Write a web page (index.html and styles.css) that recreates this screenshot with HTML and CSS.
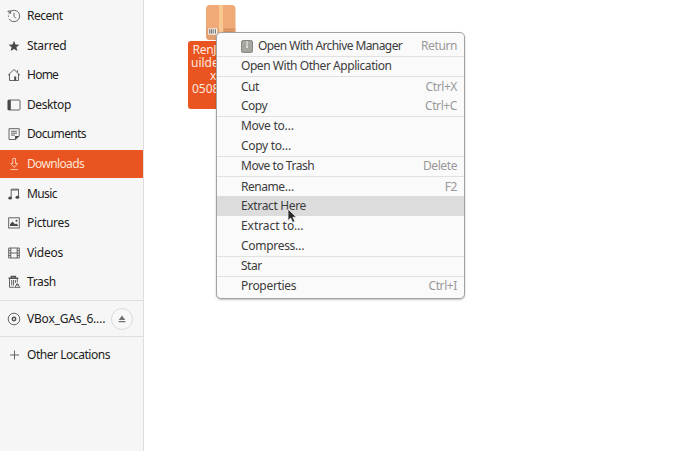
FILE: index.html
```html
<!DOCTYPE html>
<html lang="en">
<head>
<meta charset="utf-8">
<title>Downloads</title>
<link rel="stylesheet" href="styles.css">
</head>
<body>
<div class="window">
  <nav class="sidebar">
    <div class="places">
      <div class="place"><svg viewBox="0 0 14 14"><path d="M3.2 2.7A5.7 5.7 0 1 1 2 9.8" class="line"/><path d="M1.4 7.8V6.5M2 4.6l.4-.8M.8 2.2l3-.3-.5 2.8z" class="line"/><path d="M7 3.8v3.5l1.8 2" class="line"/></svg><span class="t-recent">Recent</span></div>
      <div class="place"><svg viewBox="0 0 14 14"><path d="M7 1.8l1.5 3.6 3.9.3-3 2.5 1 3.8L7 9.9 3.6 12l1-3.8-3-2.5 3.9-.3z" class="solid"/></svg><span class="t-starred">Starred</span></div>
      <div class="place"><svg viewBox="0 0 14 14"><path d="M1 7.3L7 1.5l6 5.8M2.5 6v6.5h9V6M10.5 4.5V2.2" class="line"/><path d="M7.2 8.5h2v4h-2z" class="solid"/></svg><span class="t-home">Home</span></div>
      <div class="place"><svg viewBox="0 0 14 14"><rect x="1" y="2" width="12" height="10" rx="1" class="line"/><path d="M.8 2h3v10h-3z" class="solid"/></svg><span class="t-desktop">Desktop</span></div>
      <div class="place"><svg viewBox="0 0 14 14"><path d="M2 1.7h10.2v7.2l-3.4 3.6H2z" class="line"/><path d="M4 4.3h6M4 6.2h6M4 8.1h4" class="line"/><path d="M8 12.6V9h4.5z" class="solid"/></svg><span class="t-documents">Documents</span></div>
      <div class="place selected"><svg viewBox="0 0 14 14"><path d="M5.8 1.5h2.8v5h2L7.2 10.4 3.8 6.5h2zM3.4 12.6h7.6" class="line"/></svg><span class="t-downloads">Downloads</span></div>
      <div class="place"><svg viewBox="0 0 14 14"><path d="M4.2 10.8V2.2h7.3v7.7M4.2 3h7.3" class="line"/><ellipse cx="3.1" cy="11" rx="1.9" ry="1.5" class="solid"/><ellipse cx="10.4" cy="10.3" rx="1.9" ry="1.5" class="solid"/></svg><span class="t-music">Music</span></div>
      <div class="place"><svg viewBox="0 0 14 14"><rect x="1.7" y="1.8" width="10.6" height="10.2" class="line"/><path d="M3 10V8.2L5.5 5.6 8 8.3l1.2-.9L11 9v1z" class="solid"/><circle cx="9.5" cy="4.7" r="1" class="solid"/></svg><span class="t-pictures">Pictures</span></div>
      <div class="place"><svg viewBox="0 0 14 14"><path d="M1.7 2h10.6v10H1.7zM3.8 2v10M10.2 2v10M3.8 7h6.4" class="line"/><path d="M1.7 4.5h2M1.7 7h2M1.7 9.5h2M10.2 4.5h2M10.2 7h2M10.2 9.5h2" class="line"/></svg><span class="t-videos">Videos</span></div>
      <div class="place"><svg viewBox="0 0 14 14"><path d="M1.5 3.2h9.8M4.3 3V1.4h4V3" class="line bold"/><path d="M2.5 3.5v8.8h5M10.3 3.5v3.7M4.7 5v5.5M6.5 5v5.5M8.4 5v3" class="line"/><path d="M8 12.4l2.2-4.1 2.7 4.1zM9 10h3" class="line"/></svg><span class="t-trash">Trash</span></div>
    </div>
    <div class="mount place"><svg viewBox="0 0 14 14"><circle cx="7" cy="7" r="5.8" class="line"/><circle cx="7" cy="7" r="1.7" class="line bold"/></svg><span class="t-vbox">VBox_GAs_6.…</span><button class="eject" aria-label="Eject"><svg viewBox="0 0 8 8"><path d="M4 .6L7.3 5H.7zM.7 6h6.6v1.2H.7z"/></svg></button></div>
    <div class="other place"><svg viewBox="0 0 14 14"><path d="M7.5 2.5v9M3 7h9" class="line"/></svg><span class="t-other">Other Locations</span></div>
  </nav>
  <main class="files">
    <div class="file">
      <svg class="package" viewBox="0 0 32 36"><rect x="1" y="1" width="29.5" height="35" rx="4" fill="#efaa78"/><path d="M1 24h29.5v8a4 4 0 0 1-4 4H5a4 4 0 0 1-4-4z" fill="#e29f70"/><path d="M14 1h4v35h-4z" fill="#f8c890"/><path d="M3.3 24.3h9v6.4h-9z" fill="#f7f4ef"/><path d="M4.8 25.2v4.4M6.4 25.2v4.4M8.2 25.2v4.4M10.4 25.2v4.4" stroke="#555" stroke-width=".9"/><path d="M19.5 25.6h9M19.5 27.6h9" stroke="#cf8455" stroke-width=".8"/></svg>
      <div class="filename"><span class="l1">RenJ</span><span class="l2">uilde</span><span class="l3">x</span><span class="l4">0508</span></div>
    </div>
  </main>
  <div class="menu">
    <div class="item app"><svg viewBox="0 0 12 13"><rect x=".5" y=".5" width="11" height="12" rx="1.6" fill="#a4a59f" stroke="#888983"/><path d="M5.2 1h1.8v6H5.2z" fill="#c2c3bd"/><path d="M6.1 2v5" stroke="#eee" stroke-dasharray="1 1"/><rect x="5.3" y="6" width="1.6" height="2" fill="#e4e4e0"/></svg><span class="m-archive">Open With Archive Manager</span><kbd>Return</kbd></div>
    <hr>
    <div class="item"><span class="m-app">Open With Other Application</span></div>
    <hr>
    <div class="item"><span class="m-cut">Cut</span><kbd>Ctrl+X</kbd></div>
    <div class="item"><span class="m-cut">Copy</span><kbd>Ctrl+C</kbd></div>
    <hr>
    <div class="item"><span class="m-move">Move to…</span></div>
    <div class="item"><span class="m-move">Copy to…</span></div>
    <hr>
    <div class="item"><span class="m-trash">Move to Trash</span><kbd>Delete</kbd></div>
    <hr>
    <div class="item"><span class="m-rename">Rename…</span><kbd>F2</kbd></div>
    <div class="item hover"><span class="m-here">Extract Here</span></div>
    <div class="item"><span class="m-extract">Extract to…</span></div>
    <div class="item"><span class="m-compress">Compress…</span></div>
    <hr>
    <div class="item"><span class="m-cut">Star</span></div>
    <hr>
    <div class="item"><span class="m-prop">Properties</span><kbd>Ctrl+I</kbd></div>
  </div>
  <svg class="cursor" viewBox="0 0 12 16"><path d="M1 1v11.5l2.7-2.4 2 4.3 2.2-1-2-4.2h3.5z" fill="#2b2b2b" stroke="#eee" stroke-width=".8"/></svg>
</div>
</body>
</html>
```

FILE: styles.css
```css
* { box-sizing: border-box; }
body {
  margin: 0;
  background: #fff;
  font: 12px/16px "Noto Sans", sans-serif;
  color: #1c1c1c;
}
.window {
  position: relative;
  display: flex;
  width: 700px;
  height: 451px;
  overflow: hidden;
}
.sidebar {
  width: 144px;
  background: #f6f6f6;
  border-right: 1px solid #dedede;
}
.places {
  display: flex;
  flex-direction: column;
  gap: 1.55px;
  height: 300px;
  padding-top: 2.25px;
}
.place {
  display: flex;
  flex: none;
  align-items: center;
  height: 28px;
  padding-left: 7px;
  white-space: nowrap;
}
.place > svg { flex: none; width: 14px; height: 14px; margin-right: 6px; }
.line { fill: none; stroke: #555; stroke-width: .9; }
.bold { stroke-width: 1.5; }
.solid { fill: #484848; }
.selected { background: #e95420; color: #ffe3d5; }
.selected .line { stroke: #ffd2bc; }
.mount { height: 36px; border-top: 1px solid #dedede; }
.other { height: 37px; border-top: 1px solid #dedede; }
.t-recent { letter-spacing: -.5px; }
.t-starred { letter-spacing: -.3px; }
.t-home { letter-spacing: -.75px; }
.t-desktop { letter-spacing: -.4px; }
.t-documents { letter-spacing: -.65px; }
.t-downloads { letter-spacing: -.65px; }
.t-music { letter-spacing: -.6px; }
.t-pictures { letter-spacing: -.35px; }
.t-videos { letter-spacing: -.25px; }
.t-trash { letter-spacing: -.35px; }
.t-vbox { letter-spacing: -.2px; }
.t-other { letter-spacing: -.46px; }
.eject {
  display: flex;
  align-items: center;
  justify-content: center;
  width: 22px;
  height: 22px;
  margin-left: auto;
  margin-right: 10px;
  padding: 0;
  border: 1px solid #dadada;
  border-radius: 50%;
  background: #f8f8f8;
}
.eject svg { width: 8px; height: 8px; fill: #707070; }
.files { flex: 1; padding: 4px 0 0 44px; }
.file { width: 66px; }
.package { display: block; width: 32px; height: 36px; margin-left: 17px; }
.filename {
  display: flex;
  flex-direction: column;
  height: 68px;
  margin-top: 1px;
  padding: 2px 0 0 3px;
  border-radius: 3px;
  background: #e95420;
  color: #ffe9df;
  line-height: 13.1px;
}
.l1 { padding-left: 1.5px; letter-spacing: -.3px; }
.l3 { padding-left: 19px; }
.l4 { padding-left: 1px; }
.menu {
  position: absolute;
  left: 216px;
  top: 32px;
  width: 249px;
  height: 267px;
  padding-top: 3.4px;
  border: 1px solid #a2a2a2;
  border-radius: 5px;
  background: #fafafa;
  box-shadow: 0 1px 2px rgba(0, 0, 0, .25);
  color: #3c3c3c;
}
.item {
  display: flex;
  align-items: center;
  height: 19.75px;
  padding: 0 7px 0 24px;
  white-space: nowrap;
}
.app svg { width: 12px; height: 13px; margin-right: 5px; }
.menu hr { height: 1px; margin: 0 0 -.6px; border: 0; background: #e1e1e1; }
.hover { background: #dcdcdc; }
.m-archive { letter-spacing: -.58px; }
.m-app { letter-spacing: -.44px; }
.m-cut { letter-spacing: -.5px; }
.m-move { letter-spacing: -.3px; }
.m-trash { letter-spacing: -.47px; }
.m-rename { letter-spacing: -.45px; }
.m-here { letter-spacing: -.35px; }
.m-extract { letter-spacing: -.05px; }
.m-compress { letter-spacing: -.3px; }
.m-prop { letter-spacing: -.3px; }
kbd { margin-left: auto; font: inherit; letter-spacing: -.4px; color: #999; }
.cursor { position: absolute; left: 287px; top: 208px; width: 12px; height: 16px; }
```
